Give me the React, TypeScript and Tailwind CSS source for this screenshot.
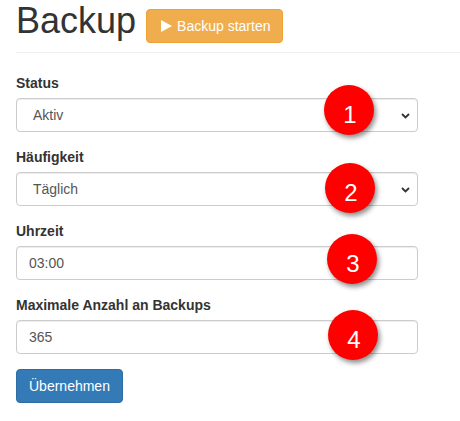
import React from "react";

const font = { fontFamily: '"Liberation Sans", Arial, sans-serif' };

function Badge({ n, top, left }: { n: number; top: number; left: number }) {
  return (
    <div
      className="absolute w-[50px] h-[50px] rounded-full bg-[#ff0000] shadow-[2px_3px_5px_rgba(0,0,0,0.45)] flex items-center justify-center pt-[9px] pl-[2px] text-white text-[24px] leading-[24px]"
      style={{ top, left }}
    >
      {n}
    </div>
  );
}

function Chevron() {
  return (
    <svg width="9" height="6" viewBox="0 0 9 6" className="absolute right-[7px] top-[14px]">
      <path d="M1 1 L4.5 4.5 L8 1" fill="none" stroke="#333" strokeWidth="1.8" />
    </svg>
  );
}

export default function App() {
  return (
    <div className="w-[460px] h-[421px] bg-white pl-4 overflow-hidden text-[14px] text-[#333]" style={font}>
      <div className="flex items-start h-[53px] border-b border-[#eeeeee]">
        <h1 className="mt-[1px] text-[36px] leading-[40px] font-normal text-[#333]">Backup</h1>
        <button className="ml-[10px] mt-[9px] h-[34px] w-[137px] flex items-center pl-[14px] rounded-[4px] bg-[#f0ad4e] border border-[#eea236] text-white text-[14px]">
          <svg width="11" height="12" viewBox="0 0 11 12" className="mr-[5px]">
            <path d="M0 0 L11 6 L0 12 Z" fill="#fff" />
          </svg>
          Backup starten
        </button>
      </div>
      <div className="w-[402px] mt-[20px]">
        <div className="relative mb-[15px]">
          <div className="font-bold leading-[20px] mb-[5px]">Status</div>
          <div className="relative h-[34px] border border-[#ccc] rounded-[4px] shadow-[inset_0_1px_1px_rgba(0,0,0,0.075)] pl-[16px] text-[#555] leading-[32px]">
            Aktiv
            <Chevron />
          </div>
          <Badge n={1} top={12} left={308} />
        </div>
        <div className="relative mb-[15px]">
          <div className="font-bold leading-[20px] mb-[5px]">Häufigkeit</div>
          <div className="relative h-[34px] border border-[#ccc] rounded-[4px] shadow-[inset_0_1px_1px_rgba(0,0,0,0.075)] pl-[16px] text-[#555] leading-[32px]">
            Täglich
            <Chevron />
          </div>
          <Badge n={2} top={16} left={309} />
        </div>
        <div className="relative mb-[15px]">
          <div className="font-bold leading-[20px] mb-[5px]">Uhrzeit</div>
          <div className="h-[34px] border border-[#ccc] rounded-[4px] shadow-[inset_0_1px_1px_rgba(0,0,0,0.075)] pl-[12px] text-[#555] leading-[32px]">
            03:00
          </div>
          <Badge n={3} top={13} left={311} />
        </div>
        <div className="relative mb-[15px]">
          <div className="font-bold leading-[20px] mb-[5px]">Maximale Anzahl an Backups</div>
          <div className="h-[34px] border border-[#ccc] rounded-[4px] shadow-[inset_0_1px_1px_rgba(0,0,0,0.075)] pl-[12px] text-[#555] leading-[32px]">
            365
          </div>
          <Badge n={4} top={15} left={312} />
        </div>
        <button className="h-[34px] px-[12px] rounded-[4px] bg-[#337ab7] border border-[#2e6da4] text-white text-[14px] leading-[20px]">
          Übernehmen
        </button>
      </div>
    </div>
  );
}
